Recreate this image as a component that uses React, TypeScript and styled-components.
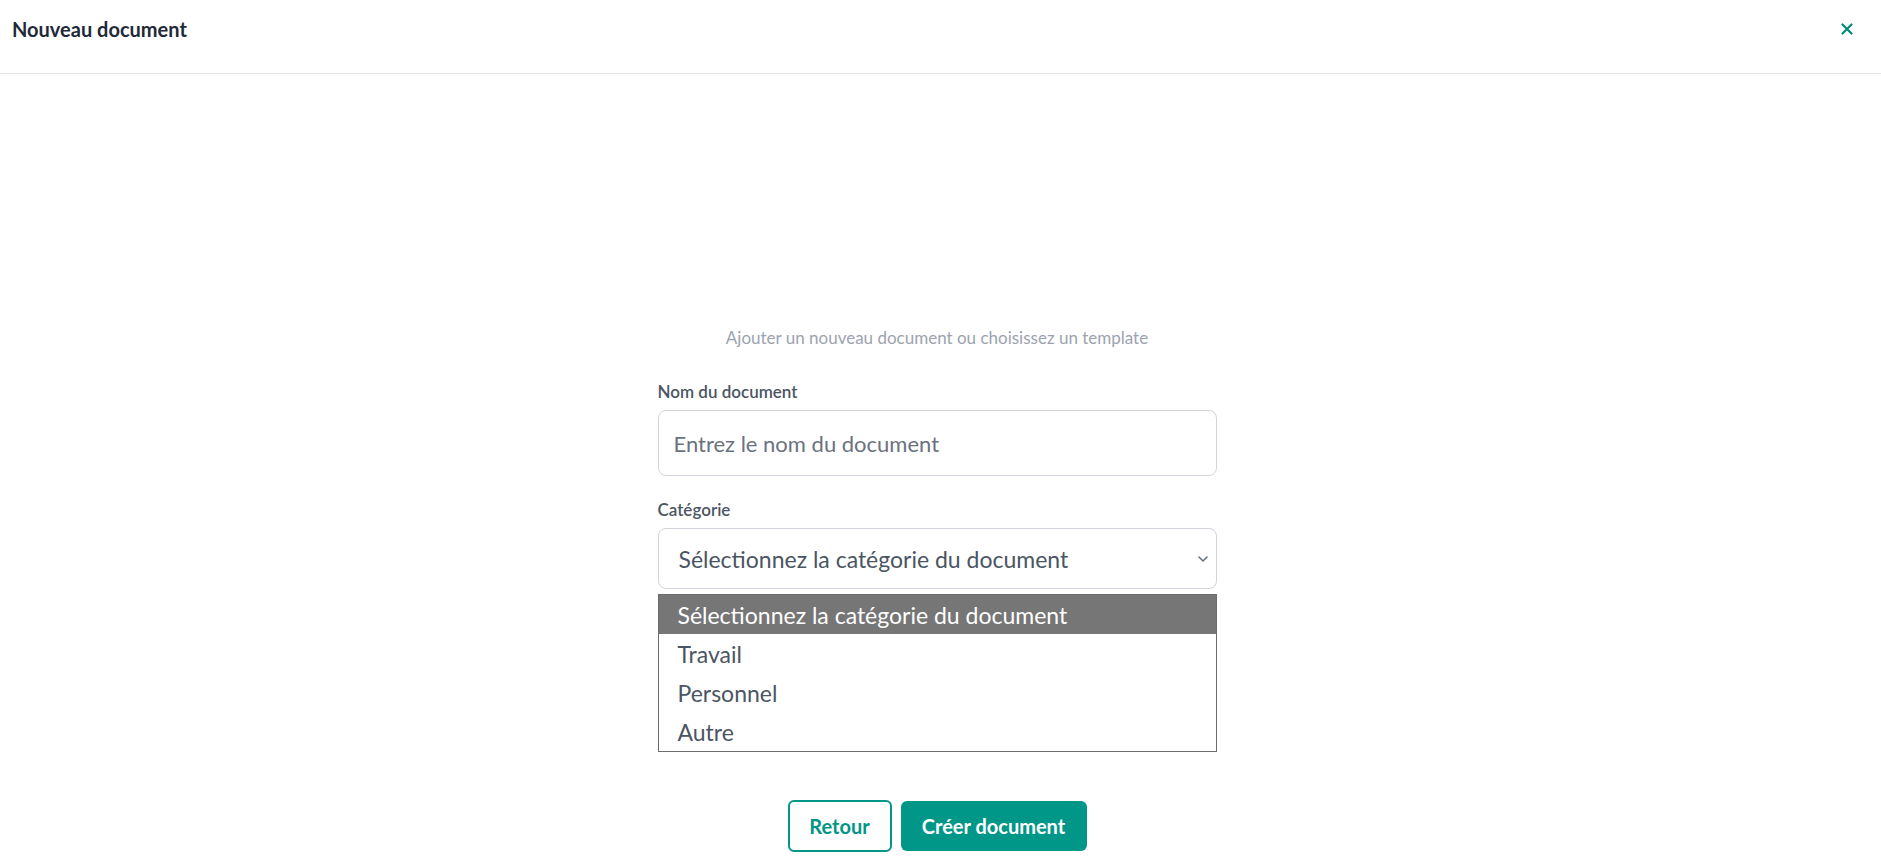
import styled, { createGlobalStyle } from 'styled-components';

const GlobalStyle = createGlobalStyle`
  body {
    margin: 0;
    background: #ffffff;
    font-family: Lato, "Noto Sans", sans-serif;
  }
  * { box-sizing: border-box; }
`;

const categories = ['Travail', 'Personnel', 'Autre'];

function App() {
  return (
    <>
      <GlobalStyle />
      <Page>
        <Header>
          <Title>Nouveau document</Title>
          <CloseButton aria-label='Fermer'>
            <svg width='12' height='12' viewBox='0 0 12 12'>
              <path d='M1.5 1.5 L10.5 10.5 M10.5 1.5 L1.5 10.5' stroke='#00897b' strokeWidth='2.2' strokeLinecap='round' />
            </svg>
          </CloseButton>
        </Header>
        <Content>
          <Subtitle>Ajouter un nouveau document ou choisissez un template</Subtitle>
          <Form>
            <Label>Nom du document</Label>
            <TextInput placeholder='Entrez le nom du document' />
            <Label top>Catégorie</Label>
            <SelectWrap>
              <SelectBox>
                <span>Sélectionnez la catégorie du document</span>
                <svg width='10' height='6' viewBox='0 0 10 6'>
                  <path d='M1 1 L5 5 L9 1' fill='none' stroke='#6b7280' strokeWidth='1.6' strokeLinecap='round' strokeLinejoin='round' />
                </svg>
              </SelectBox>
              <OptionList>
                <Option active>Sélectionnez la catégorie du document</Option>
                {categories.map((c) => (
                  <Option key={c}>{c}</Option>
                ))}
              </OptionList>
            </SelectWrap>
          </Form>
          <Actions>
            <OutlineButton>Retour</OutlineButton>
            <PrimaryButton>Créer document</PrimaryButton>
          </Actions>
        </Content>
      </Page>
    </>
  );
}

export default App;

const Page = styled.div`
  min-height: 864px;
  background: #ffffff;
`;
const Header = styled.header`
  height: 74px;
  padding: 16px 28px 0 12px;
  display: flex;
  justify-content: space-between;
  align-items: flex-start;
  border-bottom: 1px solid #e5e7eb;
`;
const Title = styled.h1`
  margin: 0;
  font-size: 20px;
  line-height: 26px;
  font-weight: 700;
  color: #1f2937;
`;
const CloseButton = styled.button`
  border: none;
  background: none;
  padding: 0;
  margin-top: 7px;
  display: flex;
  cursor: pointer;
`;
const Content = styled.main`
  display: flex;
  flex-direction: column;
  align-items: center;
  padding-top: 254px;
  padding-right: 7px;
`;
const Subtitle = styled.p`
  margin: 0;
  font-size: 17px;
  line-height: 20px;
  color: #9ca3af;
`;
const Form = styled.div`
  width: 559px;
  margin-top: 34px;
  display: flex;
  flex-direction: column;
`;
const Label = styled.label<{ top?: boolean }>`
  font-size: 17px;
  line-height: 20px;
  font-weight: 600;
  color: #4b5563;
  margin-top: ${(p) => (p.top ? '24px' : '0')};
  margin-bottom: 8px;
`;
const TextInput = styled.input`
  height: 66px;
  padding: 0 15px;
  border: 1px solid #d1d5db;
  border-radius: 8px;
  font-family: inherit;
  font-size: 22px;
  color: #374151;
  outline: none;
  &::placeholder {
    color: #6b7280;
  }
`;
const SelectWrap = styled.div`
  position: relative;
`;
const SelectBox = styled.div`
  height: 61px;
  padding: 0 8px 0 20px;
  border: 1px solid #d1d5db;
  border-radius: 8px;
  display: flex;
  align-items: center;
  justify-content: space-between;
  font-size: 23px;
  color: #4b5563;
`;
const OptionList = styled.ul`
  position: absolute;
  top: calc(100% + 5px);
  left: 0;
  right: 0;
  margin: 0;
  padding: 0;
  list-style: none;
  border: 1px solid #6b6b6b;
  background: #ffffff;
`;
const Option = styled.li<{ active?: boolean }>`
  height: 39px;
  padding-left: 19px;
  display: flex;
  align-items: center;
  font-size: 23px;
  color: ${(p) => (p.active ? '#ffffff' : '#4b5563')};
  background: ${(p) => (p.active ? '#767676' : 'transparent')};
`;
const Actions = styled.div`
  display: flex;
  gap: 9px;
  margin-top: 211px;
  align-items: center;
`;
const ButtonBase = styled.button`
  height: 52px;
  border-radius: 6px;
  font-family: inherit;
  font-size: 20px;
  font-weight: 700;
  cursor: pointer;
`;
const OutlineButton = styled(ButtonBase)`
  width: 104px;
  background: #ffffff;
  color: #009688;
  border: 2px solid #009688;
`;
const PrimaryButton = styled(ButtonBase)`
  width: 186px;
  height: 50px;
  background: #009688;
  color: #ffffff;
  border: none;
`;
